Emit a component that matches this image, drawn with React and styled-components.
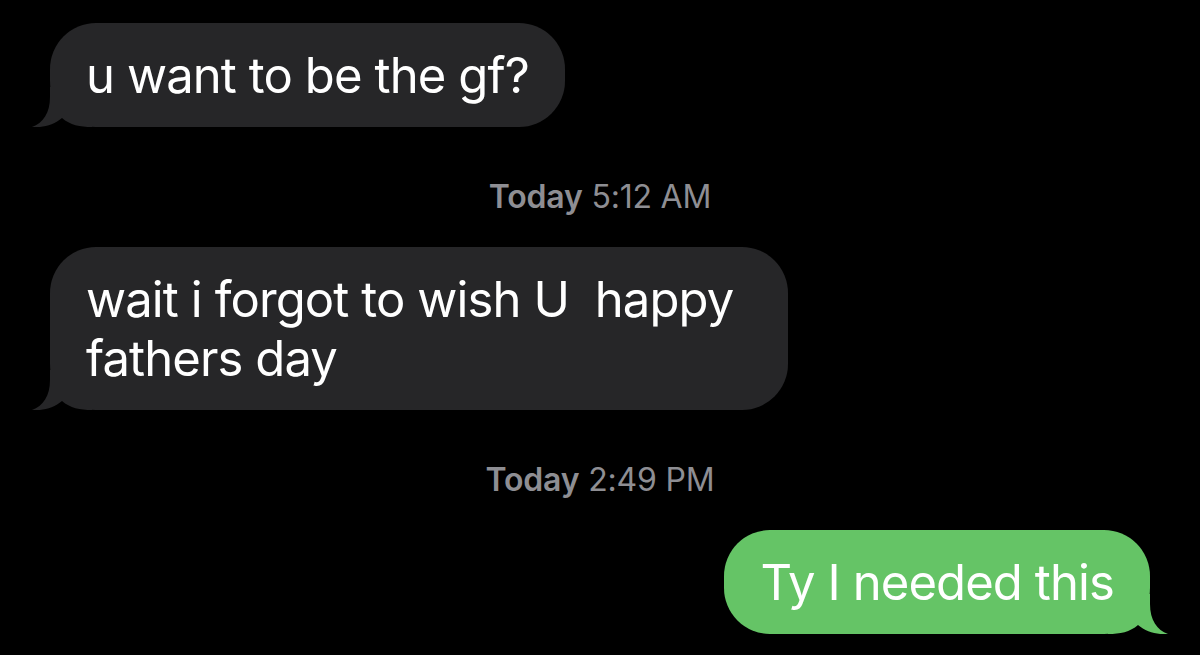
import styled, { createGlobalStyle } from "styled-components";

const GlobalStyle = createGlobalStyle`
  html, body {
    margin: 0;
    padding: 0;
    background: #000;
  }
  body {
    font-family: "Inter", "Liberation Sans", sans-serif;
    -webkit-font-smoothing: antialiased;
  }
`;

const messages = [
  { type: "in", text: "u want to be the gf?" },
  { type: "time", day: "Today", time: "5:12 AM" },
  { type: "in", lines: ["wait i forgot to wish U\u00a0 happy", "fathers day"] },
  { type: "time", day: "Today", time: "2:49 PM" },
  { type: "out", text: "Ty I needed this" },
];

function Tail({ side, color }) {
  return (
    <TailSvg side={side} viewBox="-20 -40 62 40" width="62" height="40">
      <path
        d="M0 -40 L0 -30 C0 -14 -7 -4 -18 0 C-8 1 4 -2 12 -9 C20 -2 30 0 42 0 L42 -40 Z"
        fill={color}
      />
    </TailSvg>
  );
}

function Bubble({ out, wide, children }) {
  const color = out ? "#65c466" : "#262628";
  return (
    <BubbleBox out={out} wide={wide}>
      <Tail side={out ? "right" : "left"} color={color} />
      <BubbleText>{children}</BubbleText>
    </BubbleBox>
  );
}

export default function App() {
  return (
    <>
      <GlobalStyle />
      <Thread>
        {messages.map((m, i) => {
          if (m.type === "time") {
            return (
              <Stamp key={i}>
                <b>{m.day}</b> {m.time}
              </Stamp>
            );
          }
          return (
            <Row key={i} out={m.type === "out"}>
              <Bubble out={m.type === "out"} wide={!!m.lines}>
                {m.lines
                  ? m.lines.map((l, j) => <Line key={j}>{l}</Line>)
                  : m.text}
              </Bubble>
            </Row>
          );
        })}
      </Thread>
    </>
  );
}

const Thread = styled.div`
  width: 1200px;
  height: 655px;
  box-sizing: border-box;
  padding: 23px 50px 0 50px;
  display: flex;
  flex-direction: column;
  overflow: hidden;
  background: #000;
`;

const Row = styled.div`
  display: flex;
  justify-content: ${(p) => (p.out ? "flex-end" : "flex-start")};
`;

const BubbleBox = styled.div`
  position: relative;
  box-sizing: border-box;
  background: ${(p) => (p.out ? "#65c466" : "#262628")};
  color: #fff;
  border-radius: 46px;
  padding: 23px 36px 22px 36px;
  width: ${(p) => (p.wide ? "738px" : "auto")};
  max-width: 738px;
`;

const TailSvg = styled.svg`
  position: absolute;
  bottom: 0;
  ${(p) =>
    p.side === "left"
      ? "left: -20px;"
      : "right: -20px; transform: scaleX(-1);"}
  display: block;
`;

const BubbleText = styled.div`
  position: relative;
  font-size: 49px;
  line-height: 59px;
  letter-spacing: -0.9px;
  white-space: nowrap;
`;

const Line = styled.div``;

const Stamp = styled.div`
  text-align: center;
  color: #8e8e93;
  font-size: 32px;
  line-height: 38px;
  letter-spacing: -0.2px;
  margin: 51px 0 31px;

  b {
    font-weight: 600;
  }
`;
